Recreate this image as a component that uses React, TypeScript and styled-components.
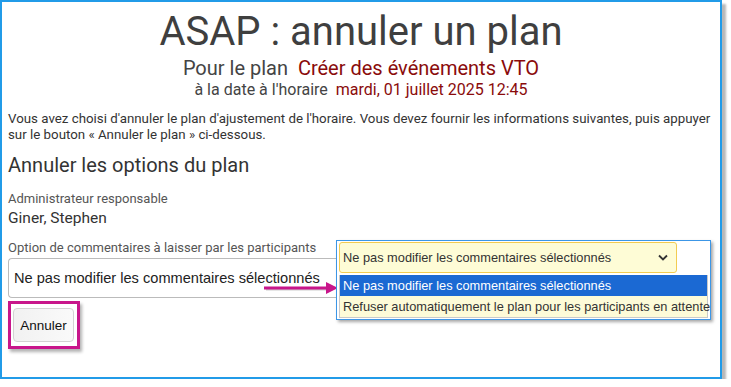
import React from "react";
import styled, { createGlobalStyle } from "styled-components";

const Global = createGlobalStyle`
  html, body { margin: 0; padding: 0; background: #fff; }
  body { font-family: Roboto, "Liberation Sans", Arial, sans-serif; color: #333; }
`;

const Frame = styled.div`
  position: relative;
  box-sizing: border-box;
  width: 722px;
  height: 379px;
  border: 2px solid #219be8;
  background: #fff;
  box-shadow: 4px 4px 2px rgba(0, 0, 0, 0.28);
  padding: 0 6px;
`;

const Header = styled.header`
  display: flex;
  flex-direction: column;
  align-items: center;
  color: #444;
`;

const Title = styled.h1`
  margin: 6px 0 0;
  font-size: 40px;
  font-weight: 400;
  line-height: 48px;
  color: #3f3f3f;
`;

const SubLine = styled.div<{ $size: number }>`
  font-size: ${(p) => p.$size}px;
  line-height: ${(p) => Math.round(p.$size * 1.2)}px;
  color: #444;
  white-space: pre;
`;

const Accent = styled.span`
  color: #8a0b0b;
`;

const Para = styled.p`
  margin: 12px 0 0;
  font-size: 13.3px;
  line-height: 16px;
  color: #333;
`;

const SectionTitle = styled.h2`
  margin: 9px 0 0;
  font-size: 20px;
  font-weight: 400;
  line-height: 26px;
  color: #333;
`;

const Label = styled.div<{ $top: number }>`
  margin-top: ${(p) => p.$top}px;
  font-size: 13px;
  line-height: 16px;
  color: #555;
`;

const Value = styled.div`
  margin-top: 2px;
  font-size: 15.5px;
  line-height: 18px;
  color: #333;
`;

const SelectBox = styled.div`
  margin-top: 2px;
  box-sizing: border-box;
  height: 40px;
  width: 360px;
  border: 1px solid #bbb;
  border-right: none;
  border-radius: 4px 0 0 4px;
  display: flex;
  align-items: center;
  padding-left: 5px;
  font-family: "Liberation Sans", Arial, sans-serif;
  font-size: 14.6px;
  color: #222;
`;

const Highlight = styled.div`
  margin-top: 3px;
  box-sizing: border-box;
  width: 72px;
  height: 48px;
  border: 3px solid #c8168b;
  box-shadow: 2px 3px 3px rgba(0, 0, 0, 0.3);
  padding: 4px 4px 4px 2px;
`;

const Button = styled.button`
  box-sizing: border-box;
  width: 61px;
  height: 34px;
  border: 1px solid #d2d2d2;
  border-radius: 4px;
  background: linear-gradient(to right, #f1f1f1, #fafafa);
  font-family: "Liberation Sans", Arial, sans-serif;
  font-size: 13.5px;
  color: #111;
  padding: 0;
`;

const Popup = styled.div`
  position: absolute;
  left: 334px;
  top: 238px;
  box-sizing: border-box;
  width: 375px;
  height: 80px;
  border: 1px solid #3c96e6;
  background: #fff;
  box-shadow: 2px 2px 3px rgba(0, 0, 0, 0.35);
  padding: 1px 2px;
  font-family: "Liberation Sans", Arial, sans-serif;
  font-size: 12.8px;
`;

const InnerSelect = styled.div`
  box-sizing: border-box;
  width: 338px;
  height: 31px;
  background: #fefcd6;
  border: 1px solid #f2cc52;
  border-radius: 3px;
  display: flex;
  align-items: center;
  justify-content: space-between;
  padding: 0 8px 0 3px;
  color: #333;
`;

const OptionList = styled.div`
  margin-top: 2px;
  border: 1px solid #c9c9c9;
  border-top: none;
`;

const Option = styled.div<{ $active?: boolean }>`
  height: 21px;
  display: flex;
  align-items: center;
  padding-left: 3px;
  background: ${(p) => (p.$active ? "#1b69d3" : "#fdfbd8")};
  color: ${(p) => (p.$active ? "#fff" : "#333")};
  white-space: nowrap;
`;

const Arrow = styled.svg`
  position: absolute;
  left: 262px;
  top: 279px;
  overflow: visible;
`;

export default function App() {
  return (
    <>
      <Global />
      <Frame>
        <Header>
          <Title>ASAP : annuler un plan</Title>
          <SubLine $size={20}>
            Pour le plan  <Accent>Créer des événements VTO</Accent>
          </SubLine>
          <SubLine $size={16}>
            à la date à l'horaire  <Accent>mardi, 01 juillet 2025 12:45</Accent>
          </SubLine>
        </Header>
        <Para>
          Vous avez choisi d'annuler le plan d'ajustement de l'horaire. Vous devez fournir les informations suivantes, puis appuyer
          sur le bouton « Annuler le plan » ci-dessous.
        </Para>
        <SectionTitle>Annuler les options du plan</SectionTitle>
        <Label $top={13}>Administrateur responsable</Label>
        <Value>Giner, Stephen</Value>
        <Label $top={13}>Option de commentaires à laisser par les participants</Label>
        <SelectBox>Ne pas modifier les commentaires sélectionnés</SelectBox>
        <Highlight>
          <Button>Annuler</Button>
        </Highlight>

        <Arrow width="76" height="14" viewBox="0 0 76 14">
          <line x1="2" y1="8" x2="66" y2="8" stroke="rgba(0,0,0,0.2)" strokeWidth="3" />
          <line x1="0" y1="7" x2="64" y2="7" stroke="#c8168b" strokeWidth="3" />
          <polygon points="62,1 74,7 62,13" fill="#c8168b" />
        </Arrow>

        <Popup>
          <InnerSelect>
            <span>Ne pas modifier les commentaires sélectionnés</span>
            <svg width="10" height="7" viewBox="0 0 10 7">
              <polyline points="1,1.5 5,5.5 9,1.5" fill="none" stroke="#333" strokeWidth="1.8" />
            </svg>
          </InnerSelect>
          <OptionList>
            <Option $active>Ne pas modifier les commentaires sélectionnés</Option>
            <Option>Refuser automatiquement le plan pour les participants en attente</Option>
          </OptionList>
        </Popup>
      </Frame>
    </>
  );
}
